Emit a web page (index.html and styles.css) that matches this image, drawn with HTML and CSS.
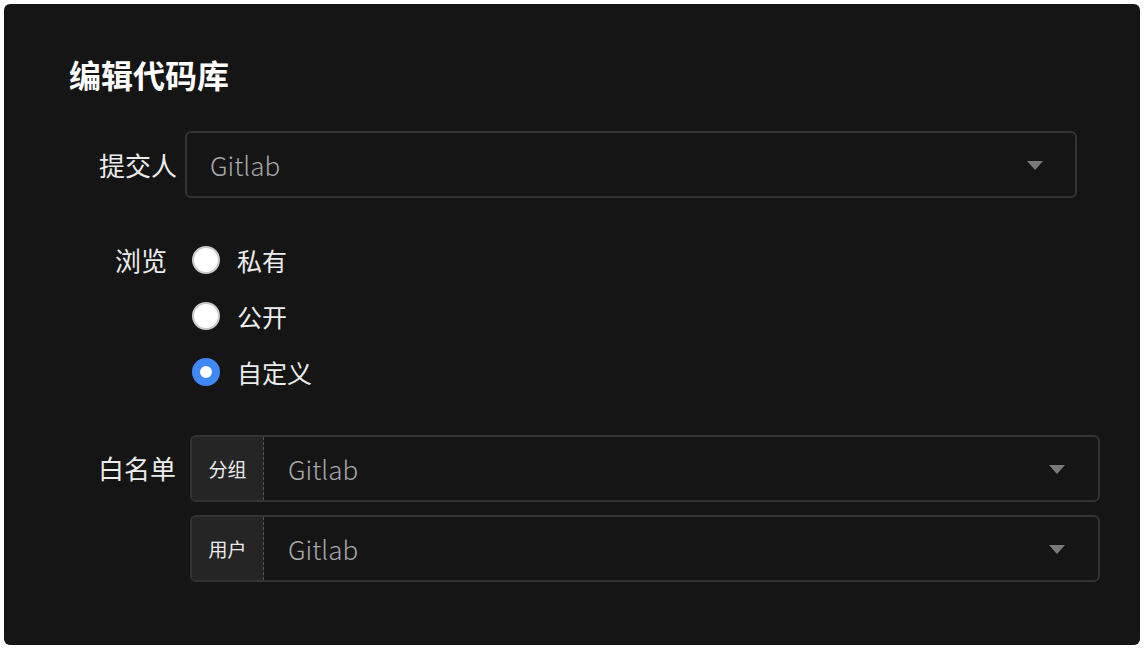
FILE: index.html
```html
<!DOCTYPE html>
<html lang="zh">
    <head>
        <meta charset="utf-8">
        <title>编辑代码库</title>
        <link rel="stylesheet" href="styles.css">
    </head>
    <body>
        <div class="panel">
            <h1 class="title">编辑代码库</h1>

            <div class="row row-committer">
                <label class="label">提交人</label>
                <div class="select">
                    <span class="select-value">Gitlab</span>
                    <span class="arrow"></span>
                </div>
            </div>

            <div class="row row-browse">
                <label class="label">浏览</label>
                <ul class="radios">
                    <li class="radio"><span class="dot"></span>私有</li>
                    <li class="radio"><span class="dot"></span>公开</li>
                    <li class="radio checked"><span class="dot"></span>自定义</li>
                </ul>
            </div>

            <div class="row row-whitelist">
                <label class="label">白名单</label>
                <div class="groups">
                    <div class="group">
                        <span class="addon">分组</span>
                        <span class="select-value">Gitlab</span>
                        <span class="arrow"></span>
                    </div>
                    <div class="group">
                        <span class="addon">用户</span>
                        <span class="select-value">Gitlab</span>
                        <span class="arrow"></span>
                    </div>
                </div>
            </div>
        </div>
    </body>
</html>
```

FILE: styles.css
```css
html {
    height: 100%;
}
body {
    margin: 0;
    background-color: #fff;
    font-family: "Noto Sans CJK SC", "Noto Sans", sans-serif;
}
.panel {
    box-sizing: border-box;
    margin: 4px;
    height: 641px;
    background-color: #151515;
    border-radius: 6px;
    padding: 50px 40px 0 65px;
    color: #ececec;
}
.title {
    margin: 0 0 37px 0;
    font-size: 32px;
    line-height: 40px;
    font-weight: 700;
    color: #fff;
}
.row {
    display: flex;
    align-items: center;
}
.label {
    box-sizing: border-box;
    width: 116px;
    flex: none;
    text-align: right;
    font-size: 26px;
    line-height: 36px;
    padding-right: 8px;
}
.select,
.group {
    box-sizing: border-box;
    display: flex;
    align-items: center;
    height: 67px;
    border: 2px solid #333;
    border-radius: 6px;
}
.select {
    width: 892px;
    padding: 0 32px 0 23px;
}
.select-value {
    flex: 1;
    font-size: 26px;
    font-weight: 300;
    color: #a8a8ac;
}
.arrow {
    width: 0;
    height: 0;
    border-left: 8px solid transparent;
    border-right: 8px solid transparent;
    border-top: 9px solid #7a7a7a;
    margin-top: 2px;
}

/* browse */
.row-browse {
    margin-top: 34px;
    align-items: flex-start;
}
.row-browse .label {
    padding-right: 18px;
    margin-top: 10px;
}
.radios {
    list-style: none;
    margin: 0 0 0 7px;
    padding: 0;
}
.radio {
    display: flex;
    align-items: center;
    height: 56px;
    font-size: 25px;
}
.dot {
    box-sizing: border-box;
    width: 28px;
    height: 28px;
    border-radius: 50%;
    background-color: #fff;
    border: 2px solid #c9c9cc;
    margin-right: 17px;
}
.checked .dot {
    border: 8px solid #3f88f5;
    background-color: #fff;
}

/* whitelist */
.row-whitelist {
    margin-top: 35px;
    align-items: flex-start;
}
.row-whitelist .label {
    padding-right: 9px;
    margin-top: 15px;
}
.groups {
    margin-left: 5px;
}
.group {
    width: 910px;
    margin-bottom: 13px;
    padding-right: 33px;
    overflow: hidden;
}
.addon {
    box-sizing: border-box;
    align-self: stretch;
    display: flex;
    align-items: center;
    justify-content: center;
    width: 72px;
    background-color: #252525;
    border-right: 1px dashed #555;
    font-size: 19px;
    margin-right: 24px;
}
```
